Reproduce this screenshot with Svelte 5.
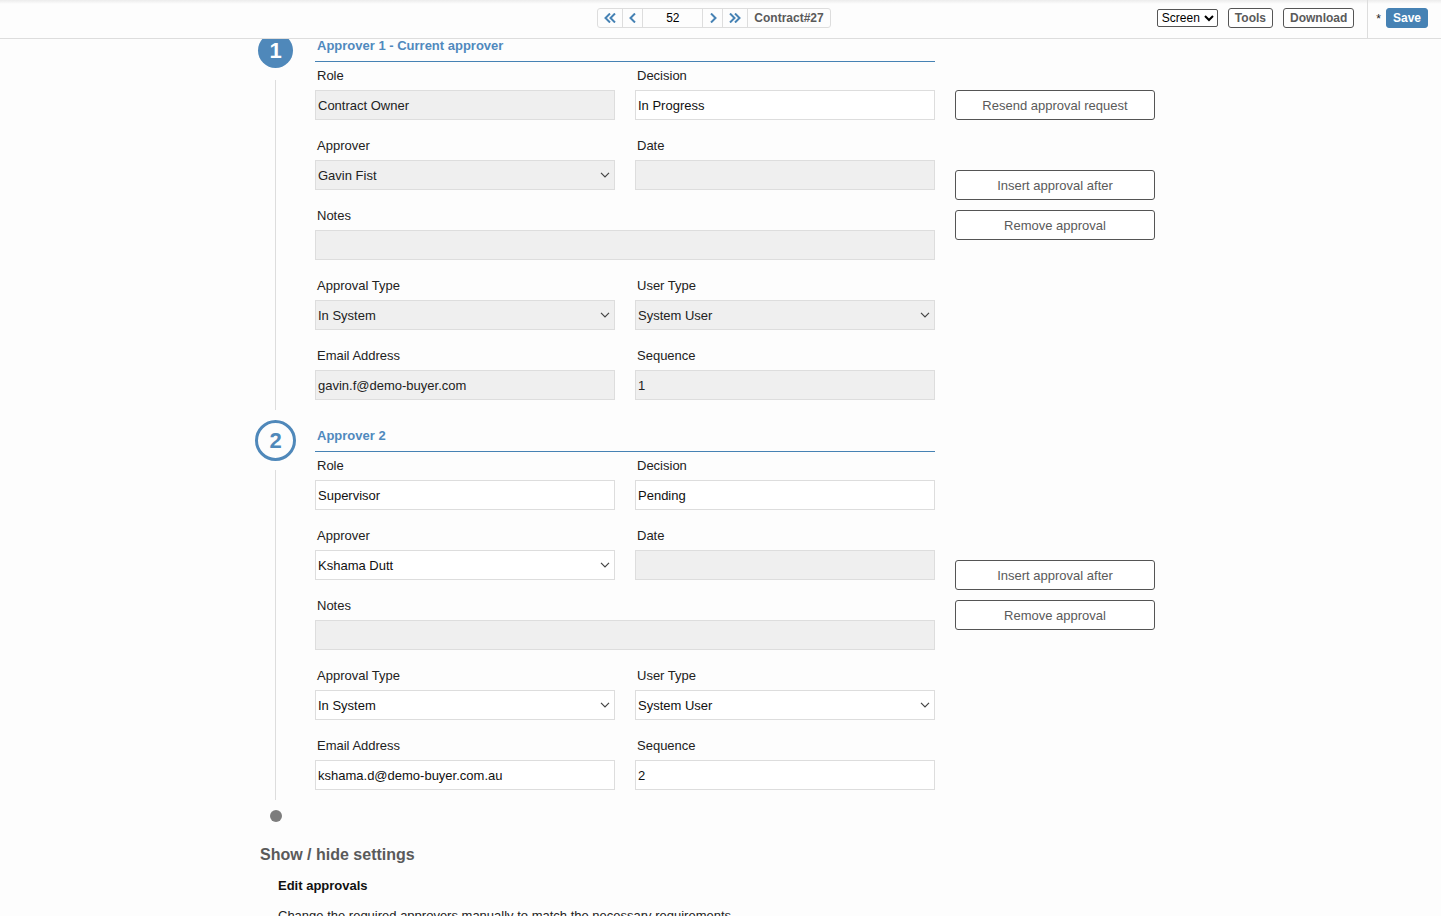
<script lang="ts">
  type Field = {
    key: string
    label: string
    value: string
    kind?: 'text' | 'select'
    readonly?: boolean
    wide?: boolean
  }

  type Approval = {
    id: number
    title: string
    current: boolean
    fields: Field[]
  }

  let record = $state('52')
  let screen = $state('Screen')

  let approvals = $state<Approval[]>([
    {
      id: 1,
      title: 'Approver 1 - Current approver',
      current: true,
      fields: [
        { key: 'role', label: 'Role', value: 'Contract Owner', readonly: true },
        { key: 'decision', label: 'Decision', value: 'In Progress' },
        { key: 'approver', label: 'Approver', value: 'Gavin Fist', kind: 'select', readonly: true },
        { key: 'date', label: 'Date', value: '', readonly: true },
        { key: 'notes', label: 'Notes', value: '', readonly: true, wide: true },
        { key: 'type', label: 'Approval Type', value: 'In System', kind: 'select', readonly: true },
        { key: 'user', label: 'User Type', value: 'System User', kind: 'select', readonly: true },
        { key: 'email', label: 'Email Address', value: 'gavin.f@demo-buyer.com', readonly: true },
        { key: 'sequence', label: 'Sequence', value: '1', readonly: true }
      ]
    },
    {
      id: 2,
      title: 'Approver 2',
      current: false,
      fields: [
        { key: 'role', label: 'Role', value: 'Supervisor' },
        { key: 'decision', label: 'Decision', value: 'Pending' },
        { key: 'approver', label: 'Approver', value: 'Kshama Dutt', kind: 'select' },
        { key: 'date', label: 'Date', value: '', readonly: true },
        { key: 'notes', label: 'Notes', value: '', readonly: true, wide: true },
        { key: 'type', label: 'Approval Type', value: 'In System', kind: 'select' },
        { key: 'user', label: 'User Type', value: 'System User', kind: 'select' },
        { key: 'email', label: 'Email Address', value: 'kshama.d@demo-buyer.com.au' },
        { key: 'sequence', label: 'Sequence', value: '2' }
      ]
    }
  ])
</script>

{#snippet arrow(label: string, path: string)}
  <button type="button" class="step" class:double={path.length > 20} aria-label={label}>
    <svg viewBox="0 0 12 10" width="12" height="10"><path d={path} /></svg>
  </button>
{/snippet}

<div class="app">
  <header>
    <nav class="pager">
      {@render arrow('First', 'M6 .5 1.5 5 6 9.5M11 .5 6.5 5l4.5 4.5')}
      {@render arrow('Previous', 'M8 .5 3.5 5 8 9.5')}
      <input class="record" aria-label="Record" bind:value={record} />
      {@render arrow('Next', 'M4 .5 8.5 5 4 9.5')}
      {@render arrow('Last', 'M1 .5 5.5 5 1 9.5M6 .5 10.5 5 6 9.5')}
      <span class="name">Contract#27</span>
    </nav>

    <div class="tools">
      <select class="screen" aria-label="View" bind:value={screen}>
        <option>Screen</option>
      </select>
      <button type="button">Tools</button>
      <button type="button">Download</button>
      <div class="save-area">
        <span>*</span>
        <button type="button" class="save">Save</button>
      </div>
    </div>
  </header>

  <main>
    <div class="content">
      {#each approvals as approval (approval.id)}
        <section class="approval">
          <div class="rail">
            <div class="marker">
              <span class="number" class:current={approval.current}>{approval.id}</span>
            </div>
            <div class="line"></div>
          </div>

          <div class="details">
            <h2>{approval.title}</h2>
            <div class="fields">
              {#each approval.fields as field (field.key)}
                {@const id = `${field.key}-${approval.id}`}
                <div class="field" class:wide={field.wide}>
                  <label for={id}>{field.label}</label>
                  {#if field.kind === 'select'}
                    <div class="select">
                      <select {id} bind:value={field.value} disabled={field.readonly}>
                        <option>{field.value}</option>
                      </select>
                      <svg viewBox="0 0 10 6" width="10" height="6"><path d="M1 .8 5 4.8 9 .8" /></svg>
                    </div>
                  {:else}
                    <input {id} type="text" bind:value={field.value} disabled={field.readonly} />
                  {/if}
                </div>
              {/each}
            </div>
          </div>

          <div class="actions">
            <div class="request">
              {#if approval.current}
                <button type="button">Resend approval request</button>
              {/if}
            </div>
            <button type="button">Insert approval after</button>
            <button type="button">Remove approval</button>
          </div>
        </section>
      {/each}

      <div class="end"></div>

      <section class="settings">
        <h2>Show / hide settings</h2>
        <h3>Edit approvals</h3>
        <p>Change the required approvers manually to match the necessary requirements.</p>
      </section>
    </div>
  </main>
</div>

<style>
  :global(body) {
    background: #fdfdfd;
    font-family: 'Liberation Sans', Arial, sans-serif;
    font-size: 13px;
    color: #222;
  }

  .app {
    display: flex;
    flex-direction: column;
    height: 100vh;
  }

  button,
  input,
  select {
    box-sizing: border-box;
    margin: 0;
    font: inherit;
  }

  header {
    display: grid;
    grid-template-columns: 1fr auto 1fr;
    align-items: center;
    flex: none;
    box-sizing: border-box;
    height: 39px;
    padding-right: 13px;
    border-bottom: 1px solid #ddd;
    background: linear-gradient(#ececec, #fdfdfd 4px);
    font-size: 12px;
  }

  .pager {
    display: flex;
    grid-column: 2;
    box-sizing: border-box;
    height: 20px;
    margin-bottom: 2px;
    border: 1px solid #ddd;
    border-radius: 3px;
  }

  .step {
    display: flex;
    align-items: center;
    justify-content: center;
    width: 20px;
    padding: 0;
    border: 0;
    border-right: 1px solid #ddd;
    background: none;
  }

  .step.double {
    width: 25px;
  }

  .step path {
    fill: none;
    stroke: #4682b4;
    stroke-width: 2;
  }

  .record {
    width: 60px;
    padding: 0;
    border: 0;
    border-right: 1px solid #ddd;
    background: none;
    color: #000;
    text-align: center;
  }

  .name {
    padding: 0 6px;
    color: #5a5a5a;
    font-weight: bold;
    line-height: 18px;
  }

  .tools {
    display: flex;
    align-items: center;
    justify-content: flex-end;
    gap: 10px;
    height: 38px;
  }

  .tools button,
  .tools .screen {
    height: 20px;
    margin-bottom: 2px;
  }

  .tools .screen {
    height: 18px;
    padding: 0;
    border: 1px solid #555;
    border-radius: 2px;
    background: #fff;
    color: #000;
  }

  .tools button {
    padding: 0 6px;
    border: 1px solid #555;
    border-radius: 3px;
    background: #fff;
    color: #5a5a5a;
    font-weight: bold;
  }

  .save-area {
    display: flex;
    align-items: center;
    gap: 5px;
    height: 38px;
    margin-left: 3px;
    padding-left: 8px;
    border-left: 1px solid #ddd;
  }

  .tools .save {
    border-color: #4682b4;
    background: #4682b4;
    color: #fff;
  }

  main {
    flex: 1;
    min-height: 0;
    overflow-y: auto;
    scrollbar-width: none;
  }

  .content {
    max-width: 931px;
    margin: -9px auto 0;
  }

  .approval {
    display: grid;
    grid-template-columns: 41px minmax(0, 620px) 200px;
    gap: 0 20px;
    margin-bottom: 20px;
    margin-right: 30px;
  }

  .rail {
    display: flex;
    flex-direction: column;
    align-items: center;
  }

  .marker {
    display: flex;
    align-items: center;
    justify-content: center;
    height: 41px;
    margin-bottom: 9px;
  }

  .number {
    box-sizing: border-box;
    width: 41px;
    height: 41px;
    border: 3px solid #4f88ba;
    border-radius: 50%;
    color: #4f88ba;
    font-size: 22px;
    font-weight: bold;
    line-height: 35px;
    text-align: center;
  }

  .number.current {
    width: 35px;
    height: 35px;
    border: 0;
    background: #4f88ba;
    color: #fff;
  }

  .line {
    flex: 1;
    width: 1px;
    margin-bottom: -10px;
    background: #ddd;
  }

  .details {
    margin-left: -1px;
    margin-right: 1px;
  }

  .details h2 {
    margin: 0;
    padding: 1px 2px 0;
    border-bottom: 1px solid #4682b4;
    color: #5089bd;
    font-size: 13px;
    line-height: 30px;
  }

  .fields {
    display: grid;
    grid-template-columns: 1fr 1fr;
    gap: 12px 20px;
  }

  .wide {
    grid-column: span 2;
  }

  label {
    display: block;
    padding: 0 2px;
    line-height: 28px;
  }

  .field input,
  .field select {
    display: block;
    width: 100%;
    height: 30px;
    padding: 0 2px;
    border: 1px solid #ddd;
    border-radius: 0;
    background: #fff;
    color: #111;
    opacity: 1;
    appearance: none;
  }

  .field input:disabled,
  .field select:disabled {
    background: #efefef;
    color: #222;
  }

  .select {
    position: relative;
  }

  .select svg {
    position: absolute;
    top: 12px;
    right: 5px;
    pointer-events: none;
  }

  .select path {
    fill: none;
    stroke: #444;
    stroke-width: 1.2;
  }

  .actions {
    display: flex;
    flex-direction: column;
    gap: 10px;
    margin-left: -1px;
    margin-right: 1px;
    padding-top: 60px;
  }

  .request {
    height: 30px;
    margin-bottom: 40px;
  }

  .actions button {
    width: 100%;
    height: 30px;
    border: 1px solid #555;
    border-radius: 3px;
    background: #fff;
    color: #5a5a5a;
  }

  .end {
    width: 12px;
    height: 12px;
    margin-left: 15px;
    border-radius: 50%;
    background: #7d7d7d;
  }

  .settings {
    padding: 17px 0 30px 5px;
  }

  .settings h2,
  .settings h3,
  .settings p {
    margin: 0;
    line-height: 30px;
  }

  .settings h2 {
    color: #5a5a5a;
    font-size: 16px;
    line-height: 32px;
  }

  .settings h3,
  .settings p {
    padding-left: 18px;
    font-size: 13px;
  }

  .settings h3 {
    color: #111;
  }
</style>
